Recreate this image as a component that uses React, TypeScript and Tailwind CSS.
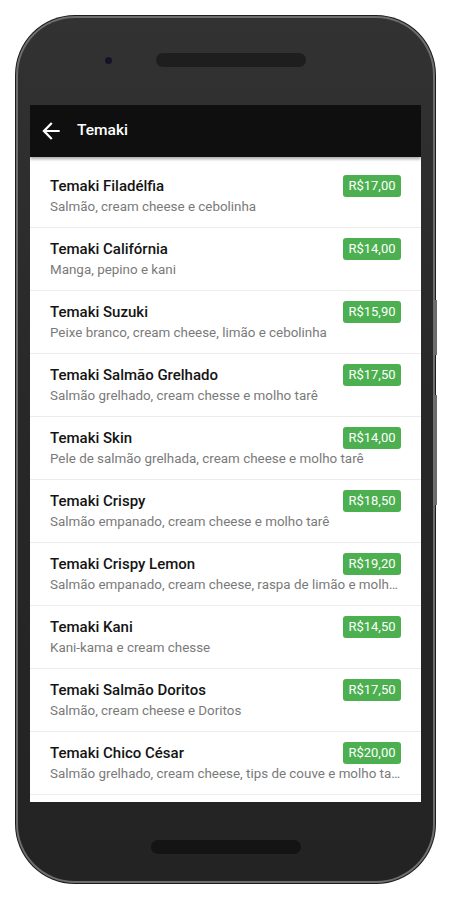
import React from "react";

// Item Type Interface
interface TemakiItem {
  name: string;
  desc: string;
  price: string;
}

const Items: TemakiItem[] = [
  { name: "Temaki Filadélfia", desc: "Salmão, cream cheese e cebolinha", price: "R$17,00" },
  { name: "Temaki Califórnia", desc: "Manga, pepino e kani", price: "R$14,00" },
  { name: "Temaki Suzuki", desc: "Peixe branco, cream cheese, limão e cebolinha", price: "R$15,90" },
  { name: "Temaki Salmão Grelhado", desc: "Salmão grelhado, cream chesse e molho tarê", price: "R$17,50" },
  { name: "Temaki Skin", desc: "Pele de salmão grelhada, cream cheese e molho tarê", price: "R$14,00" },
  { name: "Temaki Crispy", desc: "Salmão empanado, cream cheese e molho tarê", price: "R$18,50" },
  { name: "Temaki Crispy Lemon", desc: "Salmão empanado, cream cheese, raspa de limão e molho tarê", price: "R$19,20" },
  { name: "Temaki Kani", desc: "Kani-kama e cream chesse", price: "R$14,50" },
  { name: "Temaki Salmão Doritos", desc: "Salmão, cream cheese e Doritos", price: "R$17,50" },
  { name: "Temaki Chico César", desc: "Salmão grelhado, cream cheese, tips de couve e molho tarê", price: "R$20,00" },
];

// List Row Component
const ItemRow = ({ name, desc, price }: TemakiItem) => {
  return (
    <div className="h-[63px] shrink-0 px-5 pt-[10px] border-b border-[#ececec]">
      <div className="flex items-center justify-between h-[22px]">
        <p className="text-[15px] leading-[20px] font-medium text-[#141414]">{name}</p>
        <span className="shrink-0 w-[58px] h-[22px] rounded-[3px] bg-[#4caf50] text-white text-[13px] flex items-center justify-center">
          {price}
        </span>
      </div>
      <p className="text-[13.4px] leading-[18px] mt-[1px] text-[#7a7a7a] truncate">{desc}</p>
    </div>
  );
};

const App = () => {
  return (
    <div
      className="w-[450px] h-[900px] bg-white pt-[15px] pl-[15px]"
      style={{ fontFamily: "Roboto, 'Noto Sans', sans-serif" }}
    >
      <div className="relative w-[421px] h-[869px] rounded-[60px] bg-[#1c1c1c] p-[1px]">
        {/* side buttons */}
        <div className="absolute right-[-1px] top-[285px] w-[2px] h-[55px] bg-[#6b6b6b]" />
        <div className="absolute right-[-1px] top-[380px] w-[2px] h-[110px] bg-[#6b6b6b]" />
        <div className="w-full h-full rounded-[59px] bg-[#6e6e6e] p-[2px]">
          <div className="w-full h-full rounded-[57px] bg-gradient-to-b from-[#323232] via-[#272727] to-[#232323] flex flex-col items-center pt-[35px]">
            <div className="w-[404px] flex items-center">
              <div className="w-[7px] h-[7px] rounded-full bg-[#141428] ml-[81px]" />
              <div className="w-[150px] h-[14px] rounded-full bg-[#1e1e1e] ml-[44px]" />
            </div>
            {/* screen */}
            <div className="mt-[38px] w-[391px] h-[697px] bg-white flex flex-col overflow-hidden">
              <div className="h-[52px] shrink-0 bg-[#0f0f0f] flex items-center pl-[8px] shadow-[0_2px_3px_rgba(0,0,0,0.35)] z-10">
                <svg width="26" height="26" viewBox="0 0 24 24" fill="white">
                  <path d="M20 11H7.83l5.59-5.59L12 4l-8 8 8 8 1.41-1.41L7.83 13H20v-2z" />
                </svg>
                <span className="ml-[13px] text-white text-[15.5px] font-medium">Temaki</span>
              </div>
              <div className="flex-1 flex flex-col pt-2 overflow-hidden">
                {Items.map((item, idx) => (
                  <ItemRow name={item.name} desc={item.desc} price={item.price} key={idx} />
                ))}
              </div>
            </div>
            <div className="mt-[38px] w-[150px] h-[14px] rounded-full bg-[#141414]" />
          </div>
        </div>
      </div>
    </div>
  );
};

export default App;
